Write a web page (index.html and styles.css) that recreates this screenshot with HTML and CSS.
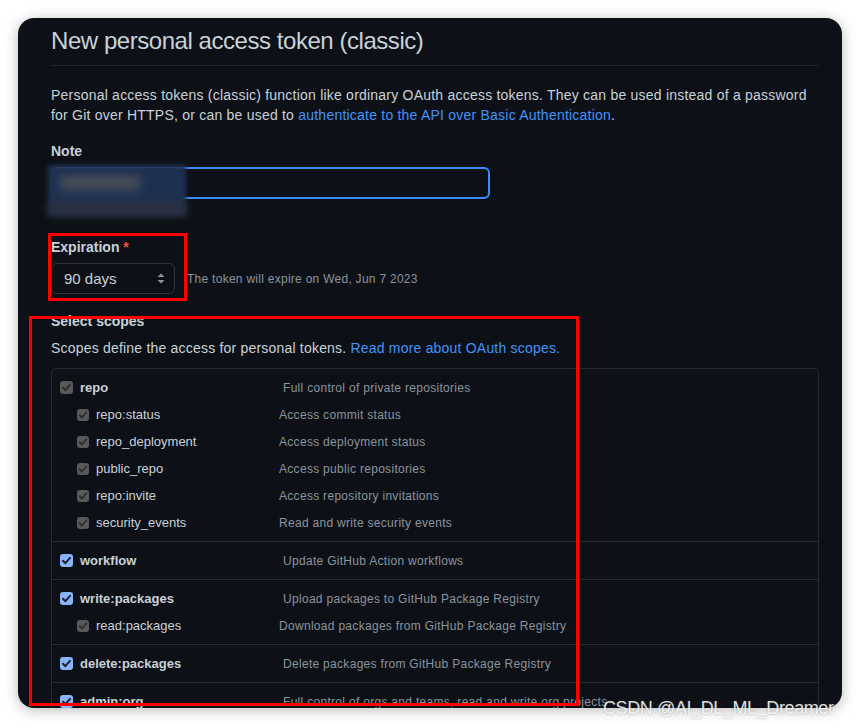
FILE: index.html
```html
<!DOCTYPE html>
<html>
<head>
<meta charset="utf-8">
<link rel="stylesheet" href="styles.css">
</head>
<body>
<div class="window">
  <div class="content">
    <h1 class="title">New personal access token (classic)</h1>
    <p class="intro">Personal access tokens (classic) function like ordinary OAuth access tokens. They can be used instead of a password for Git over HTTPS, or can be used to <a class="link">authenticate to the API over Basic Authentication</a>.</p>

    <div class="label note-label">Note</div>
    <div class="input"></div>

    <div class="label exp-label">Expiration <span class="req">*</span></div>
    <div class="exp-row">
      <div class="select">
        <span>90 days</span>
        <svg class="arrows" width="8" height="11" viewBox="0 0 8 11"><path d="M4 0.5 L7.5 4 L0.5 4 Z M4 10.5 L7.5 7 L0.5 7 Z" fill="#8b949e"/></svg>
      </div>
      <span class="hint">The token will expire on Wed, Jun 7 2023</span>
    </div>

    <div class="label scopes-label">Select scopes</div>
    <p class="scopes-desc">Scopes define the access for personal tokens. <a class="link">Read more about OAuth scopes.</a></p>

    <div class="table">
      <div class="group">
        <div class="row parent"><span class="cb dis"><svg viewBox="0 0 13 13"><path d="M3 6.8 L5.4 9.2 L10 3.8"/></svg></span><span class="name">repo</span><span class="desc">Full control of private repositories</span></div>
        <div class="row child"><span class="cb dis"><svg viewBox="0 0 13 13"><path d="M3 6.8 L5.4 9.2 L10 3.8"/></svg></span><span class="name">repo:status</span><span class="desc">Access commit status</span></div>
        <div class="row child"><span class="cb dis"><svg viewBox="0 0 13 13"><path d="M3 6.8 L5.4 9.2 L10 3.8"/></svg></span><span class="name">repo_deployment</span><span class="desc">Access deployment status</span></div>
        <div class="row child"><span class="cb dis"><svg viewBox="0 0 13 13"><path d="M3 6.8 L5.4 9.2 L10 3.8"/></svg></span><span class="name">public_repo</span><span class="desc">Access public repositories</span></div>
        <div class="row child"><span class="cb dis"><svg viewBox="0 0 13 13"><path d="M3 6.8 L5.4 9.2 L10 3.8"/></svg></span><span class="name">repo:invite</span><span class="desc">Access repository invitations</span></div>
        <div class="row child"><span class="cb dis"><svg viewBox="0 0 13 13"><path d="M3 6.8 L5.4 9.2 L10 3.8"/></svg></span><span class="name">security_events</span><span class="desc">Read and write security events</span></div>
      </div>
      <div class="group">
        <div class="row parent"><span class="cb on"><svg viewBox="0 0 13 13"><path d="M3 6.8 L5.4 9.2 L10 3.8"/></svg></span><span class="name">workflow</span><span class="desc">Update GitHub Action workflows</span></div>
      </div>
      <div class="group">
        <div class="row parent"><span class="cb on"><svg viewBox="0 0 13 13"><path d="M3 6.8 L5.4 9.2 L10 3.8"/></svg></span><span class="name">write:packages</span><span class="desc">Upload packages to GitHub Package Registry</span></div>
        <div class="row child"><span class="cb dis"><svg viewBox="0 0 13 13"><path d="M3 6.8 L5.4 9.2 L10 3.8"/></svg></span><span class="name">read:packages</span><span class="desc">Download packages from GitHub Package Registry</span></div>
      </div>
      <div class="group">
        <div class="row parent"><span class="cb on"><svg viewBox="0 0 13 13"><path d="M3 6.8 L5.4 9.2 L10 3.8"/></svg></span><span class="name">delete:packages</span><span class="desc">Delete packages from GitHub Package Registry</span></div>
      </div>
      <div class="group">
        <div class="row parent"><span class="cb on"><svg viewBox="0 0 13 13"><path d="M3 6.8 L5.4 9.2 L10 3.8"/></svg></span><span class="name">admin:org</span><span class="desc">Full control of orgs and teams, read and write org projects</span></div>
      </div>
    </div>
  </div>

  <div class="blurred"><div class="blur-text"></div><div class="blur-line"></div></div>
  <div class="mark mark-exp"></div>
  <div class="mark mark-scopes"></div>
</div>
<div class="watermark">CSDN @AI_DL_ML_Dreamer</div>
</body>
</html>
```

FILE: styles.css
```css
* { box-sizing: border-box; }
html, body { margin: 0; padding: 0; }
body {
  background: #ffffff;
  width: 860px;
  height: 727px;
  position: relative;
  overflow: hidden;
  font-family: "Liberation Sans", Arial, sans-serif;
}
.window {
  position: relative;
  margin: 18px 0 0 18px;
  width: 824px;
  height: 690px;
  background: #0d1117;
  border-radius: 16px;
  overflow: hidden;
  box-shadow: 0 2px 14px rgba(0, 0, 0, 0.28);
}
.content {
  padding: 8px 23px 0 33px;
  color: #c9d1d9;
}
.title {
  margin: 0;
  font-size: 24px;
  font-weight: 400;
  letter-spacing: -0.45px;
  line-height: 30px;
  color: #c9d1d9;
  padding-bottom: 9px;
  border-bottom: 1px solid #21262d;
}
.intro {
  margin: 19px 0 0;
  font-size: 14px;
  letter-spacing: 0.22px;
  line-height: 20px;
  color: #c9d1d9;
}
.link { color: #4493f8; text-decoration: none; }
.label {
  font-size: 14px;
  font-weight: 700;
  line-height: 20px;
  color: #c9d1d9;
}
.note-label { margin-top: 16px; }
.input {
  margin-top: 6px;
  width: 439px;
  height: 32px;
  border: 2px solid #388bfd;
  border-radius: 6px;
  background: #0d1117;
}
.exp-label { margin-top: 38px; }
.req { color: #f85149; }
.exp-row {
  margin-top: 6px;
  display: flex;
  align-items: center;
  gap: 12px;
}
.select {
  width: 124px;
  height: 31px;
  border: 1px solid #30363d;
  border-radius: 6px;
  background: #0d1117;
  display: flex;
  align-items: center;
  justify-content: space-between;
  padding: 0 9px 0 12px;
  font-size: 15px;
  color: #c9d1d9;
}
.hint { font-size: 12px; letter-spacing: 0.27px; color: #8b949e; }
.scopes-label { margin-top: 17px; }
.scopes-desc {
  margin: 7px 0 0;
  font-size: 14px;
  letter-spacing: 0.2px;
  line-height: 20px;
  color: #c9d1d9;
}
.table {
  margin-top: 10px;
  border: 1px solid #262b32;
  border-radius: 6px;
}
.group {
  padding: 5px 0;
  border-top: 1px solid #262b32;
}
.group:first-child { border-top: 0; }
.row {
  height: 27px;
  display: flex;
  align-items: center;
}
.parent { padding-left: 8px; }
.child { padding-left: 25px; }
.cb {
  flex: none;
  display: inline-flex;
  width: 13px;
  height: 13px;
  border-radius: 3px;
  margin-right: 7px;
}
.child .cb { width: 12px; height: 12px; }
.cb svg { width: 100%; height: 100%; }
.cb path { fill: none; stroke-width: 2; stroke-linecap: round; stroke-linejoin: round; }
.cb.on { background: #8ab4f8; }
.cb.on path { stroke: #1d2330; }
.cb.dis { background: #595959; }
.cb.dis path { stroke: #2e2e2e; }
.name {
  font-size: 13px;
  color: #c9d1d9;
}
.parent .name { width: 203px; font-weight: 700; }
.child .name { width: 183px; }
.desc {
  font-size: 12px;
  letter-spacing: 0.3px;
  color: #8b949e;
  white-space: nowrap;
}
.blurred {
  position: absolute;
  left: 30px;
  top: 147px;
  width: 138px;
  height: 51px;
  background: #1d3050;
  filter: blur(2px);
}
.blur-text {
  position: absolute;
  left: 12px;
  top: 11px;
  width: 80px;
  height: 14px;
  background: #4a4f58;
  filter: blur(4px);
}
.blur-line {
  position: absolute;
  left: 0;
  top: 36px;
  width: 138px;
  height: 15px;
  background: #2a3140;
  filter: blur(3px);
}
.mark {
  position: absolute;
  border: 3px solid #ff0000;
}
.mark-exp { left: 30px; top: 215px; width: 139px; height: 68px; }
.mark-scopes { left: 11px; top: 298px; width: 550px; height: 390px; }
.watermark {
  position: absolute;
  left: 603px;
  top: 697px;
  font-family: "Liberation Sans", Arial, sans-serif;
  font-size: 18px;
  letter-spacing: -0.4px;
  line-height: 22px;
  color: rgba(255, 255, 255, 0.85);
  text-shadow: 0 0 2px rgba(90, 90, 90, 0.5);
  white-space: nowrap;
}
```
